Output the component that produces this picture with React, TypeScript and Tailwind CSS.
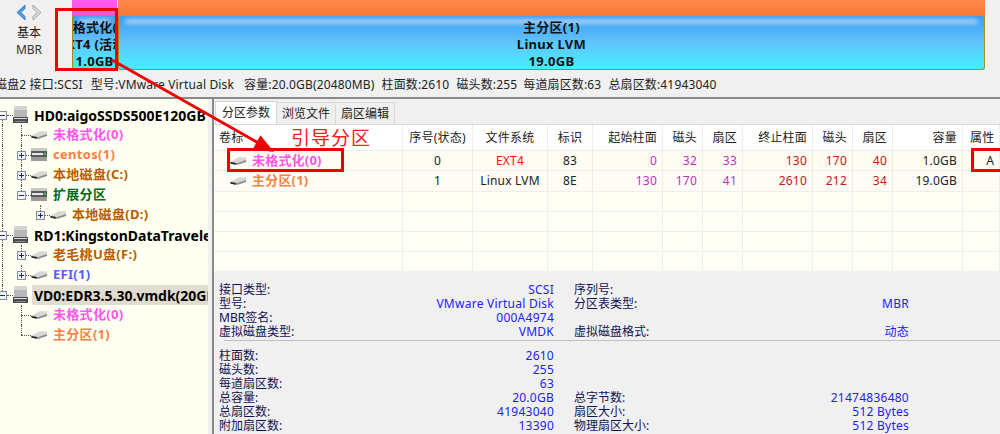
const FONT = "font-['Noto_Sans','Noto_Sans_CJK_SC',sans-serif]";

function DriveIcon() {
  return (
    <svg width="15" height="18" viewBox="0 0 15 18" className="shrink-0">
      <rect x="1" y="0" width="13" height="11" fill="#b8b8b8" />
      <rect x="1" y="0" width="13" height="4" fill="#d4d4d4" />
      <rect x="0" y="11" width="15" height="6" fill="#4a4a4a" />
      <rect x="1" y="12" width="13" height="1" fill="#e0e0e0" />
      <rect x="2" y="15" width="11" height="1" fill="#8a8a8a" />
    </svg>
  );
}

function VolumeIcon() {
  return (
    <svg width="17" height="10" viewBox="0 0 18 10" className="shrink-0">
      <path d="M0 6 L9 1 L17 1 L17 5 L8 9 L1 8 Z" fill="#d8d8d8" />
      <path d="M0 6 L8 7 L17 4 L17 6 L8 9 L1 8 Z" fill="#8c8c8c" />
      <path d="M0 6 L6 7 L6 9 L1 8 Z" fill="#222222" />
    </svg>
  );
}

function FixedIcon() {
  return (
    <svg width="17" height="14" viewBox="0 0 17 14" className="shrink-0">
      <rect x="0" y="0" width="16" height="3" fill="#c8c8c8" />
      <rect x="0" y="3" width="16" height="6" fill="#5a5a5a" />
      <rect x="1" y="5" width="11" height="2" fill="#e8e8e8" />
      <rect x="13" y="5" width="2" height="2" fill="#3fbf4f" />
      <rect x="0" y="9" width="16" height="4" fill="#9a9a9a" />
    </svg>
  );
}

function Expander({ open }: { open: boolean }) {
  return (
    <span className="w-[9px] h-[9px] border border-[#7f8ea8] bg-[#f4f4f4] flex items-center justify-center shrink-0 relative">
      <span className="w-[5px] h-px bg-[#1f2a66]" />
      {!open && <span className="absolute w-px h-[5px] bg-[#1f2a66]" />}
    </span>
  );
}

type TreeRow = {
  label: string;
  color: string;
  indent: string;
  box?: "open" | "closed";
  dots?: string;
  icon: "drive" | "volume" | "fixed";
  guides: string[];
  selected?: boolean;
};

const treeRows: TreeRow[] = [
  { label: "HD0:aigoSSDS500E120GB", color: "text-black", indent: "w-0", box: "open", dots: "w-[6px]", icon: "drive", guides: ["left-[2px] top-[10px] bottom-0"] },
  { label: "未格式化(0)", color: "text-[#ff55ee]", indent: "w-[21px]", dots: "w-[10px]", icon: "volume", guides: ["left-[2px] top-0 bottom-0", "left-[21px] top-0 bottom-0"] },
  { label: "centos(1)", color: "text-[#ff8040]", indent: "w-[17px]", box: "closed", dots: "w-[5px]", icon: "fixed", guides: ["left-[2px] top-0 bottom-0", "left-[21px] top-0 bottom-0"] },
  { label: "本地磁盘(C:)", color: "text-[#b85c00]", indent: "w-[17px]", box: "closed", dots: "w-[5px]", icon: "volume", guides: ["left-[2px] top-0 bottom-0", "left-[21px] top-0 bottom-0"] },
  { label: "扩展分区", color: "text-[#006a1a]", indent: "w-[17px]", box: "open", dots: "w-[5px]", icon: "fixed", guides: ["left-[2px] top-0 bottom-0", "left-[21px] top-0 h-[6px]"] },
  { label: "本地磁盘(D:)", color: "text-[#b85c00]", indent: "w-[36px]", box: "closed", dots: "w-[5px]", icon: "volume", guides: ["left-[2px] top-0 bottom-0", "left-[40px] top-0 h-[6px]"] },
  { label: "RD1:KingstonDataTraveler", color: "text-black", indent: "w-0", box: "open", dots: "w-[6px]", icon: "drive", guides: ["left-[2px] top-0 bottom-0"] },
  { label: "老毛桃U盘(F:)", color: "text-[#b85c00]", indent: "w-[17px]", box: "closed", dots: "w-[5px]", icon: "volume", guides: ["left-[2px] top-0 bottom-0", "left-[21px] top-0 h-[6px]"] },
  { label: "EFI(1)", color: "text-[#5a5aff]", indent: "w-[17px]", box: "closed", dots: "w-[5px]", icon: "volume", guides: ["left-[2px] top-0 bottom-0", "left-[21px] top-0 h-[6px]"] },
  { label: "VD0:EDR3.5.30.vmdk(20GB)", color: "text-black", indent: "w-0", box: "open", dots: "w-[6px]", icon: "drive", guides: ["left-[2px] top-0 h-[10px]"], selected: true },
  { label: "未格式化(0)", color: "text-[#ff55ee]", indent: "w-[21px]", dots: "w-[10px]", icon: "volume", guides: ["left-[21px] top-0 bottom-0"] },
  { label: "主分区(1)", color: "text-[#ff8040]", indent: "w-[21px]", dots: "w-[10px]", icon: "volume", guides: ["left-[21px] top-0 h-[10px]"] },
];

const COLS = "grid grid-cols-[189px_70px_75px_45px_70px_40px_40px_70px_40px_40px_70px_37px]";

const headers = [
  { t: "卷标", c: "justify-start pl-[5px]" },
  { t: "序号(状态)", c: "justify-center" },
  { t: "文件系统", c: "justify-center" },
  { t: "标识", c: "justify-center" },
  { t: "起始柱面", c: "justify-end pr-[5px]" },
  { t: "磁头", c: "justify-end pr-[5px]" },
  { t: "扇区", c: "justify-end pr-[5px]" },
  { t: "终止柱面", c: "justify-end pr-[5px]" },
  { t: "磁头", c: "justify-end pr-[5px]" },
  { t: "扇区", c: "justify-end pr-[5px]" },
  { t: "容量", c: "justify-end pr-[5px]" },
  { t: "属性", c: "justify-start pl-[7px]" },
];

const partitions = [
  { name: "未格式化(0)", nameColor: "text-[#ff55ee]", h: "h-[20px]", bg: "bg-[#fffdf2]", no: "0", fs: "EXT4", fsColor: "text-[#f01010]", id: "83", a: "0", b: "32", c: "33", d: "130", e: "170", f: "40", size: "1.0GB", attr: "A" },
  { name: "主分区(1)", nameColor: "text-[#ff8040]", h: "h-[21px]", bg: "bg-[#fffcf6]", no: "1", fs: "Linux LVM", fsColor: "text-[#222222]", id: "8E", a: "130", b: "170", c: "41", d: "2610", e: "212", f: "34", size: "19.0GB", attr: "" },
];

const cell = "h-full flex items-center border-r border-[#eeeeee] text-[12px] tracking-[0.2px]";

function InfoRow({ l1, v1, l2, v2 }: { l1?: string; v1?: string; l2?: string; v2?: string }) {
  return (
    <div className="flex h-[14px] items-center text-[12px] leading-[14px] whitespace-nowrap">
      <span className="w-[335px] flex justify-between">
        <span className="text-[#101050]">{l1}</span>
        <span className="text-[#2020ff] tracking-[0.25px]">{v1}</span>
      </span>
      <span className="w-[20px]" />
      <span className="w-[335px] flex justify-between">
        <span className="text-[#101050]">{l2}</span>
        <span className="text-[#2020ff] tracking-[0.25px]">{v2}</span>
      </span>
    </div>
  );
}

function DiskBlock({ className, lines, top }: { className: string; lines: string[]; top: string }) {
  return (
    <div className={`${className} h-full flex flex-col overflow-hidden`}>
      <div className={`h-[16px] shrink-0 ${top}`} />
      <div className="flex-1 relative overflow-hidden rounded-b-[3px] border-x border-b border-[#a88a10] bg-gradient-to-b from-[#3f9cf2] via-[#5fc4fb] to-[#3ff0ff] pt-[3px]">
        <div className="absolute left-[6px] right-[6px] top-[3px] h-[5px] rounded-full bg-white/50 blur-[2px]" />
        {lines.map((l) => (
          <div key={l} className="relative flex justify-center h-[17px] items-center text-[13px] tracking-[0.3px] font-bold text-[#111111] whitespace-nowrap">
            <span className="shrink-0">{l}</span>
          </div>
        ))}
      </div>
    </div>
  );
}

export default function App() {
  return (
    <div className={`relative w-[1000px] h-[434px] overflow-hidden bg-[#f0f0f0] ${FONT}`}>
      {/* disk map */}
      <div className="flex h-[70px]">
        <div className="w-[72px] pr-[14px] flex flex-col items-center">
          <div className="flex gap-[6px] mt-[3px] h-[18px] items-center">
            <svg width="10" height="17" viewBox="0 0 10 17">
              <path d="M9 1 L1 8.5 L9 16 L9 12.5 L5 8.5 L9 4.5 Z" fill="#4f9ff0" stroke="#2a69b8" strokeWidth="0.8" />
            </svg>
            <svg width="10" height="17" viewBox="0 0 10 17">
              <path d="M1 1 L9 8.5 L1 16 L1 12.5 L5 8.5 L1 4.5 Z" fill="#dcdcdc" stroke="#8f8f8f" strokeWidth="0.8" />
            </svg>
          </div>
          <span className="text-[12px] leading-[17px] mt-[3px] text-[#222222]">基本</span>
          <span className="text-[12px] leading-[17px] text-[#333333]">MBR</span>
        </div>
        <DiskBlock className="w-[45px]" top="bg-gradient-to-b from-[#ff5cf0] to-[#f050e0]" lines={["未格式化(0)", "EXT4 (活动)", "1.0GB"]} />
        <div className="w-px" />
        <DiskBlock className="w-[867px]" top="bg-gradient-to-b from-[#ff8a48] to-[#f87838]" lines={["主分区(1)", "Linux LVM", "19.0GB"]} />
      </div>

      {/* disk summary */}
      <div className="h-[29px] pt-[3px] flex items-center -ml-[5px] text-[12px] tracking-[0.15px] text-[#222222] whitespace-nowrap border-b-2 border-[#8a8a8a]">
        <span>磁盘2 接口:SCSI</span>
        <span className="ml-[8px]">型号:VMware Virtual Disk</span>
        <span className="ml-[10px]">容量:20.0GB(20480MB)</span>
        <span className="ml-[7px]">柱面数:2610</span>
        <span className="ml-[7px]">磁头数:255</span>
        <span className="ml-[6px]">每道扇区数:63</span>
        <span className="ml-[7px]">总扇区数:41943040</span>
      </div>

      <div className="flex h-[335px]">
        {/* tree */}
        <div className="w-[208px] h-full bg-[#fffff2] pt-[6px] overflow-hidden">
          {treeRows.map((r, i) => (
            <div key={i} className="relative h-5 flex items-center whitespace-nowrap">
              {r.guides.map((g) => (
                <span key={g} className={`absolute w-0 border-l border-dotted border-[#555555] ${g}`} />
              ))}
              <span className={`${r.indent} shrink-0 ${r.indent === "w-0" ? "-ml-[2px]" : ""}`} />
              {r.box && <Expander open={r.box === "open"} />}
              <span className={`${r.dots} shrink-0 border-t border-dotted border-[#555555] relative`} />
              {r.icon === "drive" && <DriveIcon />}
              {r.icon === "volume" && <VolumeIcon />}
              {r.icon === "fixed" && <FixedIcon />}
              <span
                className={`h-5 flex items-center font-bold ${r.color} ${r.indent === "w-0" ? "ml-[4px] px-[2px] text-[14px]" : "ml-[5px] text-[13px] tracking-[0.3px]"} ${r.selected ? "bg-[#e0ddd0] w-full" : ""}`}
              >
                {r.label}
              </span>
            </div>
          ))}
        </div>
        <div className="w-[4px] bg-[#f0f0f0]" />

        {/* right panel */}
        <div className="flex-1 border-l-2 border-[#8a8a8a] flex flex-col">
          <div className="h-[25px] flex items-end pl-[1px] text-[12px] text-[#222222]">
            <span className="w-[62px] h-[23px] bg-white border-x border-t border-[#d8d8d8] flex items-center justify-center">分区参数</span>
            <span className="w-[59px] h-[22px] bg-[#f0f0f0] border-r border-t border-[#d8d8d8] flex items-center justify-center">浏览文件</span>
            <span className="w-[59px] h-[22px] bg-[#f0f0f0] border-r border-t border-[#d8d8d8] flex items-center justify-center">扇区编辑</span>
          </div>
          <div className="border-t border-[#d8d8d8]">
            <div className={`${COLS} h-[25px] bg-white`}>
              {headers.map((h, i) => (
                <div key={i} className={`${cell} ${h.c} text-[#222222]`}>{h.t}</div>
              ))}
            </div>
            {partitions.map((p) => (
              <div key={p.name} className={`${COLS} ${p.h} border-t border-[#eeeeee] ${p.bg}`}>
                <div className={`${cell} pl-[16px] gap-[5px] font-bold !text-[13px] ${p.nameColor}`}>
                  <VolumeIcon />
                  {p.name}
                </div>
                <div className={`${cell} justify-center text-[#222222]`}>{p.no}</div>
                <div className={`${cell} justify-center ${p.fsColor}`}>{p.fs}</div>
                <div className={`${cell} justify-center text-[#222222]`}>{p.id}</div>
                <div className={`${cell} justify-end pr-[5px] text-[#c030c0]`}>{p.a}</div>
                <div className={`${cell} justify-end pr-[5px] text-[#c030c0]`}>{p.b}</div>
                <div className={`${cell} justify-end pr-[5px] text-[#c030c0]`}>{p.c}</div>
                <div className={`${cell} justify-end pr-[5px] text-[#c02020]`}>{p.d}</div>
                <div className={`${cell} justify-end pr-[5px] text-[#c02020]`}>{p.e}</div>
                <div className={`${cell} justify-end pr-[5px] text-[#c02020]`}>{p.f}</div>
                <div className={`${cell} justify-end pr-[5px] text-[#222222]`}>{p.size}</div>
                <div className={`${cell} justify-end pr-[5px] text-[#222222]`}>{p.attr}</div>
              </div>
            ))}
            {[0, 1, 2, 3].map((n) => (
              <div key={n} className={`${COLS} h-[20px] border-t border-[#eeeeee] bg-[#fffef5]`}>
                {headers.map((h, i) => (
                  <div key={i} className={cell} />
                ))}
              </div>
            ))}
          </div>

          {/* disk details */}
          <div className="flex-1 pl-[5px] pt-[12px]">
            <InfoRow l1="接口类型:" v1="SCSI" l2="序列号:" />
            <InfoRow l1="型号:" v1="VMware Virtual Disk" l2="分区表类型:" v2="MBR" />
            <InfoRow l1="MBR签名:" v1="000A4974" />
            <InfoRow l1="虚拟磁盘类型:" v1="VMDK" l2="虚拟磁盘格式:" v2="动态" />
            <div className="h-px bg-[#c0c0c0] ml-[5px] mt-[1px] mb-[8px]" />
            <InfoRow l1="柱面数:" v1="2610" />
            <InfoRow l1="磁头数:" v1="255" />
            <InfoRow l1="每道扇区数:" v1="63" />
            <InfoRow l1="总容量:" v1="20.0GB" l2="总字节数:" v2="21474836480" />
            <InfoRow l1="总扇区数:" v1="41943040" l2="扇区大小:" v2="512 Bytes" />
            <InfoRow l1="附加扇区数:" v1="13390" l2="物理扇区大小:" v2="512 Bytes" />
          </div>
        </div>
      </div>

      {/* red annotations over the screenshot */}
      <div className="absolute left-[55px] top-[8px] w-[63px] h-[63px] border-[3px] border-[#f00000]" />
      <div className="absolute left-[227px] top-[148px] w-[117px] h-[24px] border-[3px] border-[#f00000]" />
      <div className="absolute left-[971px] top-[148px] w-[29px] h-[24px] border-[3px] border-[#f00000] border-r-0" />
      <span className="absolute left-[291px] top-[125px] text-[19px] leading-[26px] tracking-[1px] text-[#f02020]">引导分区</span>
      <svg className="absolute left-0 top-0" width="1000" height="434" viewBox="0 0 1000 434">
        <path d="M112 60 L262 145" stroke="#f00000" strokeWidth="3" fill="none" />
        <path d="M274 152 L252.7 149.2 L260.5 135.2 Z" fill="#f00000" />
      </svg>
    </div>
  );
}
